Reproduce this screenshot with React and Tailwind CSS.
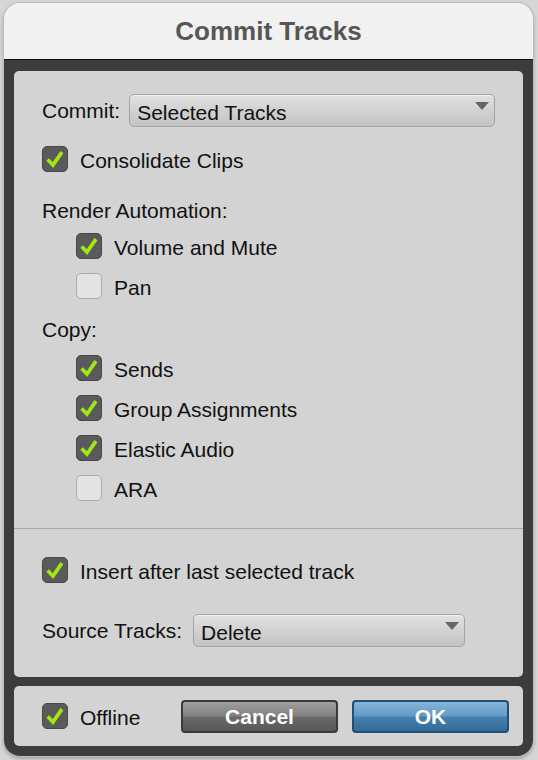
import React from "react";

function Check({ checked }) {
  if (checked) {
    return (
      <div className="w-[26px] h-[26px] shrink-0 rounded-[5px] bg-[#5a5a5a] border border-[#484848] flex items-center justify-center">
        <svg width="26" height="26" viewBox="0 0 26 26">
          <path d="M5 13.5 L10.8 19.5 L20.5 5.5" fill="none" stroke="#a2e614" strokeWidth="4" strokeLinecap="butt" strokeLinejoin="miter" />
        </svg>
      </div>
    );
  }
  return <div className="w-[26px] h-[26px] shrink-0 rounded-[5px] bg-[#e3e3e3] border border-[#a9a9a9]" />;
}

function Row({ checked, label, className = "" }) {
  return (
    <div className={"flex items-center h-[26px] gap-[12px] " + className}>
      <Check checked={checked} />
      <span className="leading-[24px] translate-y-[2px]">{label}</span>
    </div>
  );
}

function Dropdown({ value, className = "" }) {
  return (
    <div className={"relative h-[33px] rounded-[5px] border border-[#a3a3a3] bg-[linear-gradient(to_bottom,#e2e2e2,#d4d4d4_40%,#c3c3c3)] shadow-[inset_0_1px_0_#efefef] flex items-center pl-[7px] " + className}>
      <span className="leading-[24px] translate-y-[2px]">{value}</span>
      <svg className="absolute right-[5px] top-[7px]" width="14" height="8" viewBox="0 0 14 8">
        <path d="M0 0 H14 L7 8 Z" fill="#656565" />
      </svg>
    </div>
  );
}

export default function App() {
  return (
    <div className="w-[538px] h-[760px] bg-[#d6d6d6] pt-[3px] pl-[4px] overflow-hidden" style={{ fontFamily: '"Liberation Sans", Arial, sans-serif' }}>
      <div className="w-[529px] rounded-[16px] overflow-hidden shadow-[0_2px_4px_rgba(0,0,0,0.35)] ring-1 ring-[#bdbdbd]">
        <div className="h-[57px] bg-[#f1f1f1] flex items-center justify-center border-b border-[#111]">
          <span className="text-[26px] font-bold text-[#565656]">Commit Tracks</span>
        </div>
        <div className="bg-[#3c3c3c] pt-[11px] px-[10px] pb-[10px] text-[21px] text-[#111]">
          <div className="bg-[#d3d3d3] rounded-[5px] flex flex-col">
            <div className="pt-[23px] px-[28px] pb-[27px] flex flex-col">
              <div className="flex items-center h-[33px]">
                <span className="leading-[24px] mr-[9px]">Commit:</span>
                <Dropdown value="Selected Tracks" className="flex-1" />
              </div>
              <Row checked label="Consolidate Clips" className="mt-[19px]" />
              <div className="mt-[26px] leading-[24px] h-[24px] translate-y-[1px]">Render Automation:</div>
              <div className="pl-[34px] flex flex-col">
                <Row checked label="Volume and Mute" className="mt-[11px]" />
                <Row checked={false} label="Pan" className="mt-[14px]" />
              </div>
              <div className="mt-[18px] leading-[24px] h-[24px] translate-y-[1px]">Copy:</div>
              <div className="pl-[34px] flex flex-col">
                <Row checked label="Sends" className="mt-[14px]" />
                <Row checked label="Group Assignments" className="mt-[14px]" />
                <Row checked label="Elastic Audio" className="mt-[14px]" />
                <Row checked={false} label="ARA" className="mt-[14px]" />
              </div>
            </div>
            <div className="border-t border-[#a9a9a9] pt-[28px] px-[28px] pb-[30px] flex flex-col">
              <Row checked label="Insert after last selected track" />
              <div className="flex items-center h-[33px] mt-[31px]">
                <span className="leading-[24px] mr-[11px]">Source Tracks:</span>
                <Dropdown value="Delete" className="w-[272px]" />
              </div>
            </div>
          </div>
          <div className="mt-[9px] h-[60px] bg-[#d3d3d3] rounded-[5px] flex items-center pl-[28px] pr-[14px]">
            <Row checked label="Offline" />
            <div className="ml-auto flex gap-[14px]">
              <div className="w-[157px] h-[33px] rounded-[4px] border-2 border-[#3a3a3a] bg-[linear-gradient(to_bottom,#a0a0a0,#808080_48%,#6a6a6a_52%,#575757)] flex items-center justify-center">
                <span className="text-white font-bold text-[21px] leading-[24px] translate-y-[1px]">Cancel</span>
              </div>
              <div className="w-[157px] h-[33px] rounded-[4px] border-2 border-[#244f72] bg-[linear-gradient(to_bottom,#86b5d9,#6399c4_48%,#4680ae_52%,#336c98)] flex items-center justify-center">
                <span className="text-white font-bold text-[21px] leading-[24px] translate-y-[1px]">OK</span>
              </div>
            </div>
          </div>
        </div>
      </div>
    </div>
  );
}
